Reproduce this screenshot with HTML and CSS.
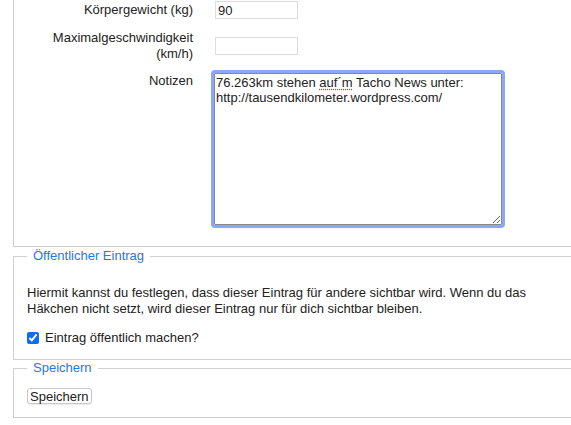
FILE: index.html
```html
<!DOCTYPE html>
<html lang="de">
<head>
<meta charset="utf-8">
<title>Eintrag</title>
<link rel="stylesheet" href="styles.css">
</head>
<body>
<div class="page">
  <fieldset class="box box-first">
    <div class="rows">
      <div class="row row-center">
        <label class="lbl" for="kg">Körpergewicht (kg)</label>
        <input class="txt" id="kg" type="text" value="90">
      </div>
      <div class="row row-center">
        <label class="lbl" for="vmax">Maximalgeschwindigkeit<br>(km/h)</label>
        <input class="txt" id="vmax" type="text" value="">
      </div>
      <div class="row row-top">
        <label class="lbl">Notizen</label>
        <div class="area">76.263km stehen <span class="spell">auf´m</span> Tacho News unter: http://tausendkilometer.wordpress.com/<svg class="grip" width="8" height="8" viewBox="0 0 8 8"><path d="M1 8 L8 1 M5 8 L8 5" stroke="#666" stroke-width="1" fill="none"/></svg></div>
      </div>
    </div>
  </fieldset>

  <fieldset class="box box-public">
    <legend class="legend">Öffentlicher Eintrag</legend>
    <p class="info">Hiermit kannst du festlegen, dass dieser Eintrag für andere sichtbar wird. Wenn du das Häkchen nicht setzt, wird dieser Eintrag nur für dich sichtbar bleiben.</p>
    <label class="check"><input type="checkbox" class="cb" checked> Eintrag öffentlich machen?</label>
  </fieldset>

  <fieldset class="box box-save">
    <legend class="legend">Speichern</legend>
    <button class="btn" type="button">Speichern</button>
  </fieldset>
</div>
</body>
</html>
```
FILE: styles.css
```css
html, body {
  margin: 0;
  padding: 0;
  overflow: hidden;
  background: #fff;
}
body {
  font-family: "Liberation Sans", Arial, sans-serif;
  font-size: 13px;
  line-height: 16px;
  color: #222;
}
.page {
  margin-left: 13px;
  width: 640px;
}
.box {
  margin: 0;
  border: 1px solid #cfcfcf;
  min-width: 0;
}
.box-first {
  border-top: none;
  padding: 1px 0 21px 0;
}
.rows {
  display: flex;
  flex-direction: column;
  gap: 11px;
}
.row {
  display: grid;
  grid-template-columns: 179px 290px;
  column-gap: 21px;
}
.row-center { align-items: center; }
.row-top { align-items: start; }
.lbl {
  text-align: right;
  color: #222;
}
.txt {
  box-sizing: border-box;
  width: 83px;
  height: 18px;
  margin: 0 0 0 1px;
  padding: 0 2px;
  border: 1px solid #dcdcdc;
  font-family: "Liberation Sans", Arial, sans-serif;
  font-size: 13px;
  color: #222;
  background: #fff;
}
.area {
  position: relative;
  box-sizing: border-box;
  width: 288px;
  height: 152px;
  border: 1px solid #888;
  border-radius: 1px;
  outline: 3px solid #87a9f6;
  outline-offset: 0;
  padding: 1px 1px;
  line-height: 15px;
  color: #222;
}
.spell {
  text-decoration: underline dotted #e33;
  text-underline-offset: 2px;
}
.grip {
  position: absolute;
  right: 1px;
  bottom: 1px;
}
.box-public {
  margin-top: 1px;
  padding: 0 0 13px 13px;
}
.box-save {
  padding: 0 0 12px 13px;
}
.legend {
  padding: 0 6px;
  color: #1a78f0;
  line-height: 16px;
}
.info {
  margin: 21px 0 13px 0;
  width: 520px;
}
.check {
  display: flex;
  align-items: center;
  gap: 6px;
  height: 16px;
}
.cb {
  margin: 0;
  width: 12px;
  height: 12px;
  accent-color: #0b6ef0;
}
.btn {
  margin-top: 12px;
  font-family: "Liberation Sans", Arial, sans-serif;
  font-size: 13px;
  line-height: 13px;
  color: #222;
  background: #fff;
  border: 1px solid #c8c8c8;
  border-radius: 3px;
  padding: 1px 2px 1px 2px;
  height: 16px;
  box-shadow: 0 1px 1px rgba(0,0,0,0.08);
}
```
